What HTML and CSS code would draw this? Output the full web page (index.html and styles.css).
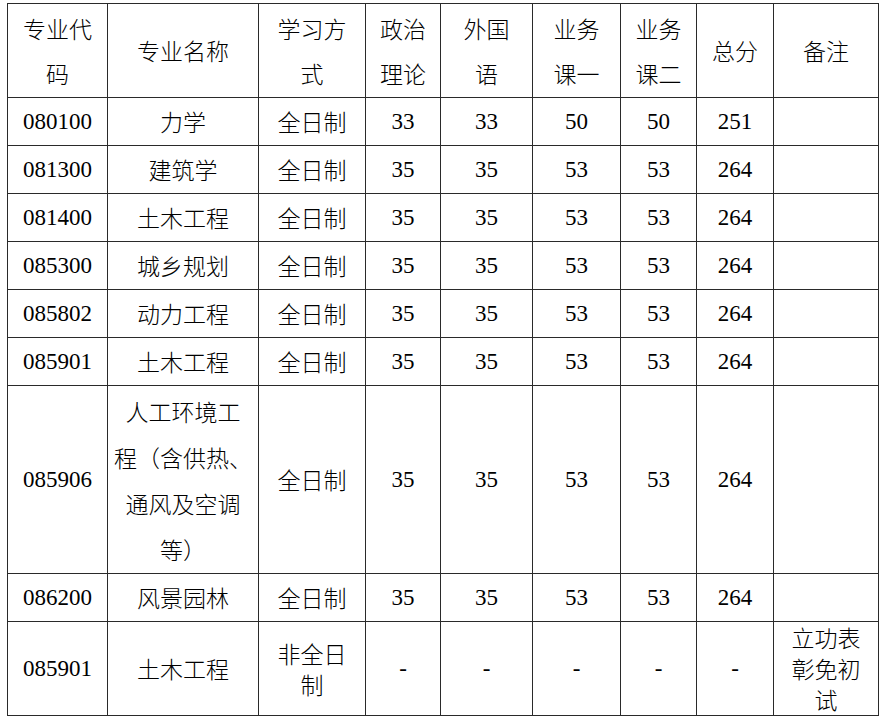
FILE: index.html
```html
<!DOCTYPE html>
<html>
<head>
<meta charset="utf-8">
<title>分数线</title>
<link rel="stylesheet" href="styles.css">
</head>
<body>
<table class="score-table">
  <colgroup>
    <col class="c1"><col class="c2"><col class="c3"><col class="c4"><col class="c5">
    <col class="c6"><col class="c7"><col class="c8"><col class="c9">
  </colgroup>
  <thead>
    <tr class="head">
      <th>专业代<br>码</th>
      <th>专业名称</th>
      <th>学习方<br>式</th>
      <th>政治<br>理论</th>
      <th>外国<br>语</th>
      <th>业务<br>课一</th>
      <th>业务<br>课二</th>
      <th>总分</th>
      <th>备注</th>
    </tr>
  </thead>
  <tbody>
    <tr><td class="num">080100</td><td>力学</td><td>全日制</td><td class="num">33</td><td class="num">33</td><td class="num">50</td><td class="num">50</td><td class="num">251</td><td></td></tr>
    <tr><td class="num">081300</td><td>建筑学</td><td>全日制</td><td class="num">35</td><td class="num">35</td><td class="num">53</td><td class="num">53</td><td class="num">264</td><td></td></tr>
    <tr><td class="num">081400</td><td>土木工程</td><td>全日制</td><td class="num">35</td><td class="num">35</td><td class="num">53</td><td class="num">53</td><td class="num">264</td><td></td></tr>
    <tr><td class="num">085300</td><td>城乡规划</td><td>全日制</td><td class="num">35</td><td class="num">35</td><td class="num">53</td><td class="num">53</td><td class="num">264</td><td></td></tr>
    <tr><td class="num">085802</td><td>动力工程</td><td>全日制</td><td class="num">35</td><td class="num">35</td><td class="num">53</td><td class="num">53</td><td class="num">264</td><td></td></tr>
    <tr><td class="num">085901</td><td>土木工程</td><td>全日制</td><td class="num">35</td><td class="num">35</td><td class="num">53</td><td class="num">53</td><td class="num">264</td><td></td></tr>
    <tr class="tall"><td class="num">085906</td><td class="multi">人工环境工<br>程（含供热、<br>通风及空调<br>等）</td><td>全日制</td><td class="num">35</td><td class="num">35</td><td class="num">53</td><td class="num">53</td><td class="num">264</td><td></td></tr>
    <tr><td class="num">086200</td><td>风景园林</td><td>全日制</td><td class="num">35</td><td class="num">35</td><td class="num">53</td><td class="num">53</td><td class="num">264</td><td></td></tr>
    <tr class="last"><td class="num">085901</td><td>土木工程</td><td class="two">非全日<br>制</td><td class="num">-</td><td class="num">-</td><td class="num">-</td><td class="num">-</td><td class="num">-</td><td class="three">立功表<br>彰免初<br>试</td></tr>
  </tbody>
</table>
</body>
</html>
```

FILE: styles.css
```css
html, body {
  margin: 0;
  padding: 0;
  background: #ffffff;
}

body {
  padding: 3px 0 0 7px;
}

.score-table {
  border-collapse: collapse;
  table-layout: fixed;
  width: 871px;
  font-family: "Noto Sans CJK SC", sans-serif;
  font-size: 23px;
  color: #000;
}

.c1 { width: 100px; }
.c2 { width: 151px; }
.c3 { width: 107px; }
.c4 { width: 75px; }
.c5 { width: 92px; }
.c6 { width: 88px; }
.c7 { width: 76px; }
.c8 { width: 77px; }
.c9 { width: 105px; }

.score-table th,
.score-table td {
  border: 1px solid #2a2a2a;
  padding: 0;
  text-align: center;
  vertical-align: middle;
  font-weight: 300;
  line-height: 45px;
  height: 47px;
}

.score-table td.num {
  font-family: "Liberation Serif", "Times New Roman", serif;
  font-weight: 400;
}

.head th {
  height: 93px;
}

.tall td {
  height: 187px;
}

.tall .multi {
  line-height: 46px;
}

.last td {
  height: 93px;
}

.last .two {
  line-height: 31px;
}

.last .three {
  line-height: 31px;
}
```
